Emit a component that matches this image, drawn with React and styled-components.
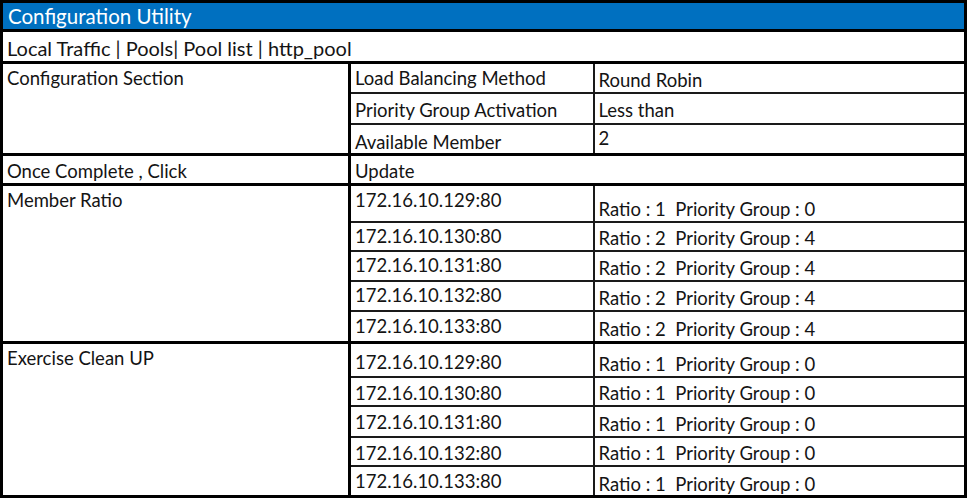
import React from 'react';
import styled, {createGlobalStyle} from "styled-components";

const GlobalStyle = createGlobalStyle`
  html, body {
    margin: 0;
    padding: 0;
    background: #ffffff;
  }
`;

const Page = styled.div`
  width: 969px;
  height: 502px;
  background: #ffffff;
  font-family: Lato, "Open Sans", sans-serif;
`;

const Sheet = styled.table`
  width: 967px;
  table-layout: fixed;
  border-collapse: collapse;
  border: 3px solid #000;
  color: #141414;
  font-size: 18.5px;
`;

const Row = styled.tr`
  height: ${({height}) => height}px;
  border-top: ${({thick}) => thick ? '3px solid #000' : '2px solid #1a1a1a'};
`;

const Cell = styled.td`
  padding: ${({pad}) => pad || '0 4px'};
  vertical-align: ${({valign}) => valign || 'middle'};
  border-left: ${({thick}) => thick ? '3px solid #000' : '2px solid #1a1a1a'};
  font-size: ${({size}) => size ? `${size}px` : 'inherit'};
  white-space: nowrap;
  line-height: 20px;
`;

const TitleCell = styled.td`
  background: #0070c0;
  color: #ffffff;
  font-size: 20.5px;
  padding: 0 5px;
  line-height: 22px;
`;

const memberRows = [
    {ip: "172.16.10.129:80", ratio: 1, group: 0, height: 37, ipPad: '4px 4px 0', ratioPad: '0 4px 2px'},
    {ip: "172.16.10.130:80", ratio: 2, group: 4, height: 29, ipPad: '3px 4px 0', ratioPad: '0 4px 2px'},
    {ip: "172.16.10.131:80", ratio: 2, group: 4, height: 30, ipPad: '3px 4px 0', ratioPad: '0 4px 2px'},
    {ip: "172.16.10.132:80", ratio: 2, group: 4, height: 30, ipPad: '3px 4px 0', ratioPad: '0 4px 2px'},
    {ip: "172.16.10.133:80", ratio: 2, group: 4, height: 32, ipPad: '4px 4px 0', ratioPad: '0 4px 2px'},
];

const cleanRows = [
    {ip: "172.16.10.129:80", ratio: 1, group: 0, height: 34, ipPad: '8px 4px 0', ratioPad: '0 4px 2px'},
    {ip: "172.16.10.130:80", ratio: 1, group: 0, height: 29, ipPad: '5px 4px 0', ratioPad: '0 4px 2px'},
    {ip: "172.16.10.131:80", ratio: 1, group: 0, height: 31, ipPad: '5px 4px 0', ratioPad: '0 4px 2px'},
    {ip: "172.16.10.132:80", ratio: 1, group: 0, height: 29, ipPad: '5px 4px 0', ratioPad: '0 4px 2px'},
    {ip: "172.16.10.133:80", ratio: 1, group: 0, height: 31, ipPad: '4px 4px 0', ratioPad: '0 4px 1px'},
];

const MemberGroup = ({title, rows}) => (
    <>
        {rows.map((row, index) => (
            <Row key={row.ip} height={row.height} thick={index === 0}>
                {index === 0 && (
                    <Cell rowSpan={rows.length} valign="top" pad="4px 4px 0">{title}</Cell>
                )}
                <Cell thick valign="top" pad={row.ipPad}>{row.ip}</Cell>
                <Cell valign="bottom" pad={row.ratioPad}>Ratio : {row.ratio}&nbsp; Priority Group : {row.group}</Cell>
            </Row>
        ))}
    </>
);

const App = () => {
    return (
        <Page>
            <GlobalStyle/>
            <Sheet>
                <colgroup>
                    <col style={{width: 348}}/>
                    <col style={{width: 244}}/>
                    <col/>
                </colgroup>
                <tbody>
                <Row height={29} thick>
                    <TitleCell colSpan={3}>Configuration Utility</TitleCell>
                </Row>
                <Row height={32} thick>
                    <Cell colSpan={3} size={20} pad="2px 4px 0">Local Traffic | Pools| Pool list | http_pool</Cell>
                </Row>
                <Row height={30} thick>
                    <Cell rowSpan={3} valign="top" pad="4px 4px 0">Configuration Section</Cell>
                    <Cell thick valign="top" pad="4px 4px 0">Load Balancing Method</Cell>
                    <Cell valign="bottom" pad="0 4px 2px">Round Robin</Cell>
                </Row>
                <Row height={31}>
                    <Cell thick pad="3px 4px 0">Priority Group Activation</Cell>
                    <Cell pad="3px 4px 0">Less than</Cell>
                </Row>
                <Row height={31}>
                    <Cell thick valign="bottom" pad="0 4px 1px">Available Member</Cell>
                    <Cell valign="top" pad="3px 4px 0">2</Cell>
                </Row>
                <Row height={30} thick>
                    <Cell pad="3px 4px 0">Once Complete , Click</Cell>
                    <Cell thick colSpan={2} pad="3px 4px 0">Update</Cell>
                </Row>
                <MemberGroup title="Member Ratio" rows={memberRows}/>
                <MemberGroup title="Exercise Clean UP" rows={cleanRows}/>
                </tbody>
            </Sheet>
        </Page>
    );
};

export default App;
